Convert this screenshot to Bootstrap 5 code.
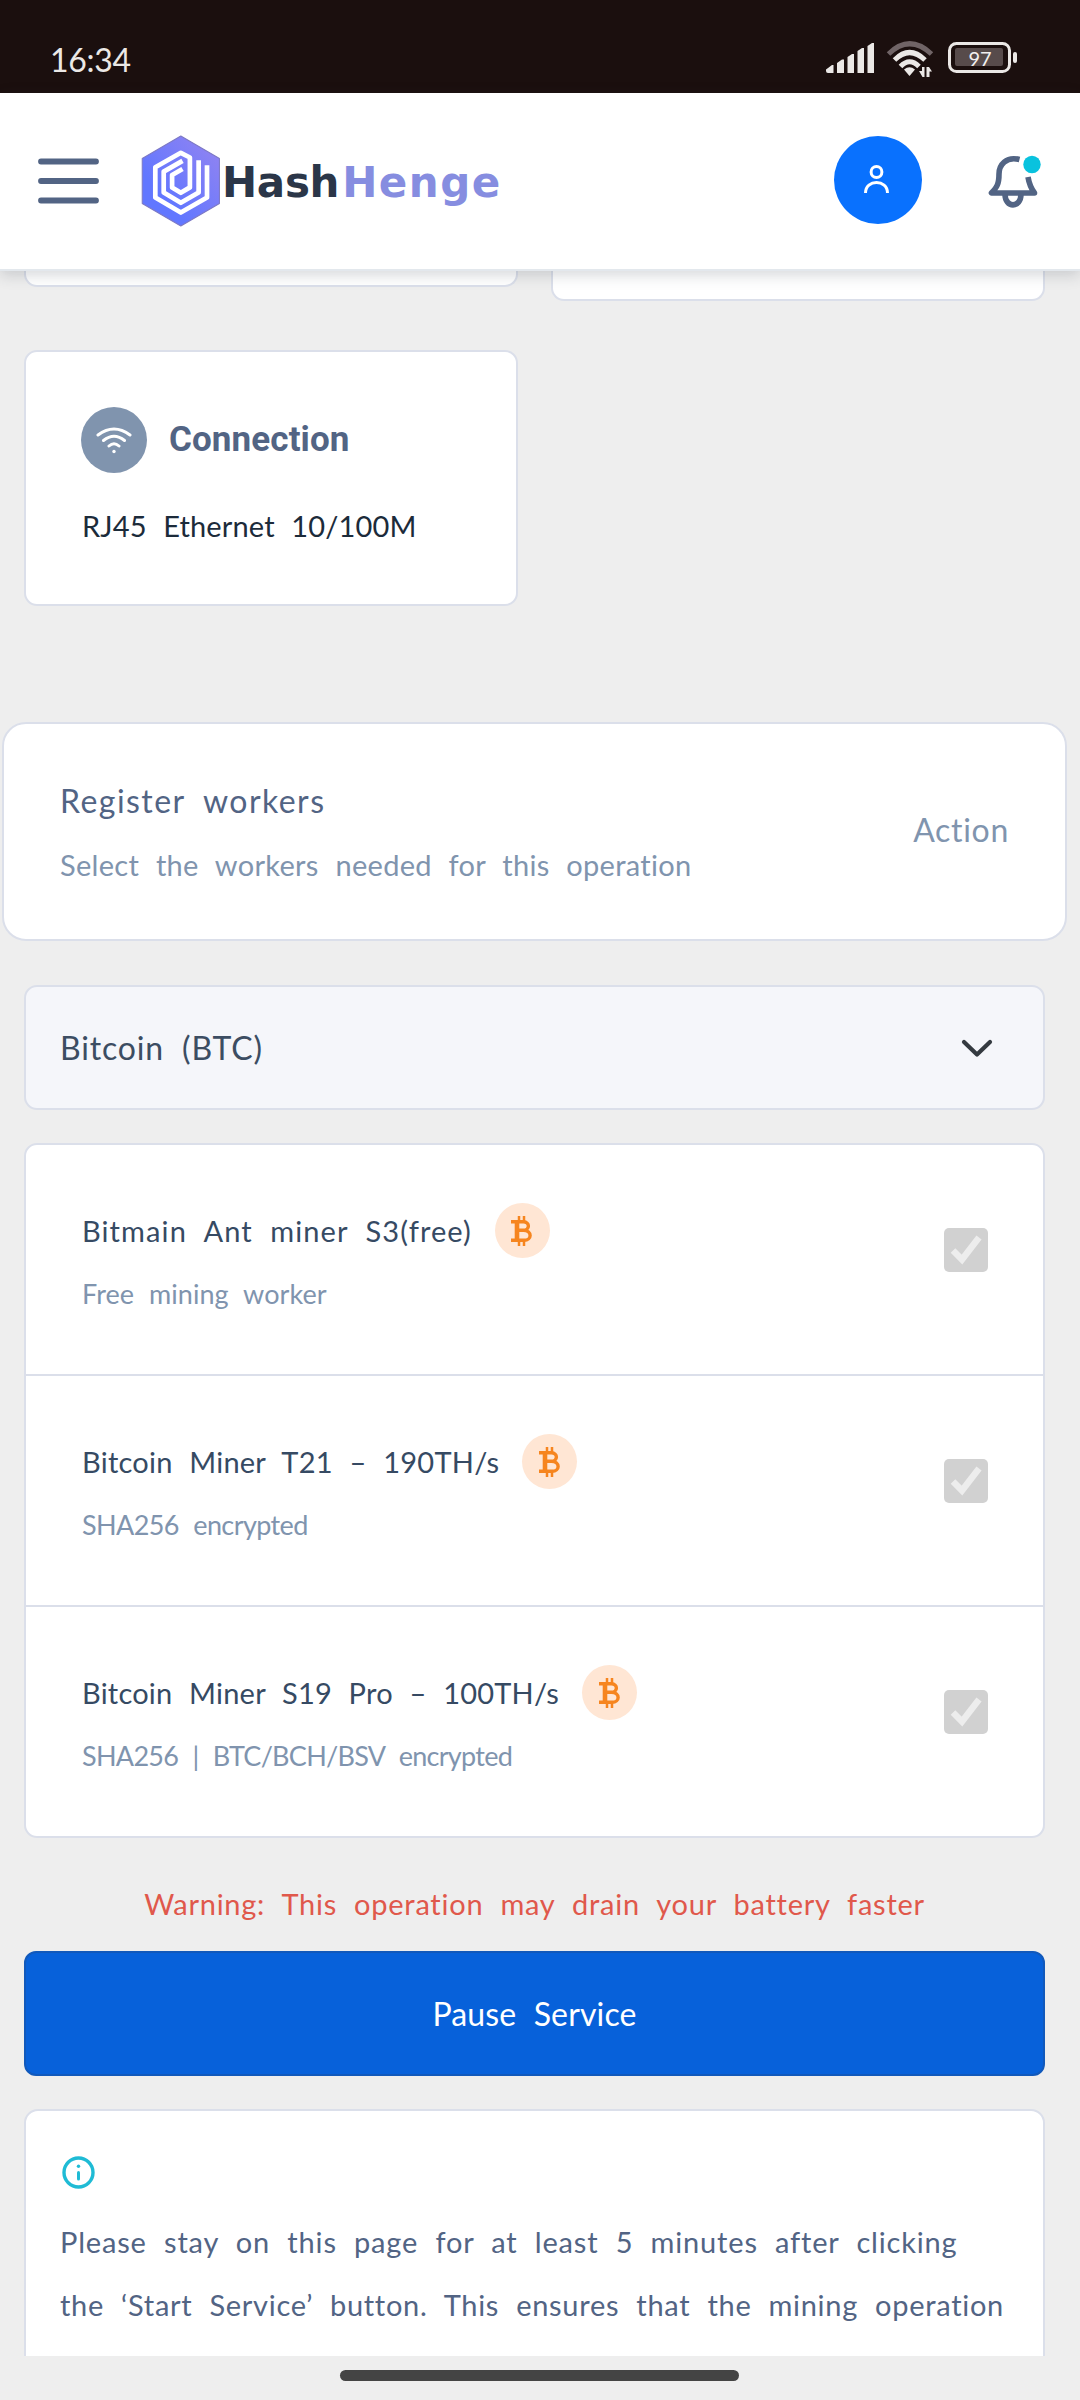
<!doctype html>
<html lang="en">
<head>
<meta charset="utf-8">
<meta name="viewport" content="width=device-width, initial-scale=1">
<title>HashHenge</title>
<link rel="stylesheet" href="https://cdn.jsdelivr.net/npm/bootstrap@5.3.0/dist/css/bootstrap.min.css">
<style>
html, body { height: 2400px; margin: 0; overflow: hidden; }
body { background: #eeeeee; font-family: Lato, "Noto Sans", sans-serif; font-size: 29px; line-height: 44px; color: #526484; word-spacing: 9px; font-variant-ligatures: none; }
svg { display: block; flex: none; }
.status-strip { height: 93px; background: #1b0f0e; color: #ebe8e6; padding: 0 62px 0 50px; }
.clock { font-size: 32px; letter-spacing: -.3px; padding-top: 38px; }
.status-icons { padding-top: 38px; }
.top-nav { height: 178px; background: #fff; border-bottom: 2px solid #e3e8ed; box-shadow: 0 4px 14px rgba(43,55,72,.2); padding: 0 39px 0 38px; position: relative; z-index: 2; }
.brand-mark { margin-left: 42px; }
.brand-word { font: bold 42px/92px "DejaVu Sans", sans-serif; color: #2b3648; margin-left: 1px; padding-top: 3px; letter-spacing: -.3px; }
.brand-word .henge { color: #868de0; letter-spacing: 1.5px; margin-left: 3px; }
.user-chip { width: 88px; height: 88px; background: #0971fe; margin-top: -2px; }
.bell-btn { margin-left: 65px; }
.page-area { padding: 0 35px 0 24px; min-height: 0; }
.panel { background: #fff; border: 2px solid #dbdfea; border-radius: 13px; }
.half { width: 494px; }
.peek-l { height: 15.5px; border-top: 0; border-radius: 0 0 13px 13px; }
.peek-r { height: 29.5px; border-top: 0; border-radius: 0 0 13px 13px; }
.peek-row { height: 79px; }
.conn { height: 256px; padding: 55px 55px 0; }
.conn-icon { width: 66px; height: 66px; background: #8094ae; }
.conn-title { font: bold 35px/66px Roboto, sans-serif; margin-left: 22px; letter-spacing: .1px; }
.conn-value { color: #1c2b3a; margin-top: 31px; letter-spacing: .15px; padding-left: 1px; }
.register { height: 219px; margin: 116px -22px 0 -22px; border-radius: 24px; padding: 0 56px; }
.soft { color: #8094ae; }
.heading-lg { font-size: 32px; line-height: 50px; }
.ls-reg { letter-spacing: 1.45px; }
.ls-sel { letter-spacing: .3px; margin-top: 17px; }
.ls-act { letter-spacing: .7px; margin-bottom: 3px; }
.coin-select { height: 125px; background: #f5f6fa; margin-top: 44px; padding: 0 48px 0 34px; color: #3c4d62; letter-spacing: .85px; }
.workers { margin-top: 33px; overflow: hidden; }
.worker { height: 231px; padding: 58px 55px 0; border-bottom: 2px solid #dbdfea; }
.worker:last-child { height: 229px; border-bottom: 0; }
.worker-name { color: #364a63; height: 55px; padding-left: 1px; }
.worker-sub { font-size: 27px; line-height: 40px; margin-top: 16px; word-spacing: 8px; letter-spacing: .05px; color: #8094ae; padding-left: 1px; }
.coin-chip { width: 55px; height: 55px; background: #ffe6d4; margin-left: 23px; }
.tick { margin-top: 25px; }
.n1 { letter-spacing: 1.1px; } .n2 { letter-spacing: .24px; } .n3 { letter-spacing: .22px; }
.s2 { letter-spacing: -.6px; } .s3 { letter-spacing: -.72px; }
.warn-line { color: #e0584b; margin-top: 44px; letter-spacing: .74px; white-space: nowrap; }
.pause-btn { height: 125px; margin-top: 25px; background: #0761da; border: 2px solid #1159bb; border-radius: 12px; color: #fff; font-size: 32px; letter-spacing: .15px; word-spacing: 9px; flex: none; }
.info-panel { margin-top: 33px; padding: 43px 34px 0; height: 320px; border-radius: 14px; flex: none; }
.info-copy { line-height: 63px; margin-top: 19px; letter-spacing: .83px; white-space: nowrap; }
.info-copy .row-b { letter-spacing: .7px; }
.gesture { height: 44px; background: #eeeeee; padding-top: 14px; }
.gesture-bar { width: 399px; height: 11px; background: #444; margin-left: 340px; }
</style>
</head>
<body class="d-flex flex-column">

<svg width="0" height="0" class="position-absolute" aria-hidden="true">
  <symbol id="coin" viewBox="0 0 22 30">
    <g fill="none" stroke="#f6851f">
      <path stroke-width="4.600" d="M6 5V25"/>
      <path stroke-width="3.400" d="M0 5.700H12.500C19 6 19 14 12.500 14.300H7M12.500 14.300C21.500 14.500 21 24.300 13 24.300H0"/>
      <path stroke-width="2.500" d="M8 0V5.500M13 0V5.500M8 24.500V30M13 24.500V30"/>
    </g>
  </symbol>
  <symbol id="ticked" viewBox="0 0 44 44">
    <rect width="44" height="44" rx="5" fill="#d1d1d1"/>
    <path d="M9 22.500L18 31.500L35 9.500" fill="none" stroke="#ededed" stroke-width="6.500"/>
  </symbol>
</svg>

<header class="status-strip d-flex justify-content-between flex-shrink-0">
  <div class="clock">16:34</div>
  <div class="status-icons">
    <svg width="194" height="40" viewBox="824 38 194 40">
      <g fill="#ebe8e6">
        <path d="M826 71V69.500L832 65H833.500V73H828Q826 73 826 71ZM837 63L842 59.500H844V73H837ZM847.500 57L852 54H854V73H847.500ZM857.500 51L862 48H864V73H857.500ZM867.500 46L872 43H874V73H867.500Z"/>
        <path d="M909.500 76L904 69.500Q909.500 65 915 69.500Z"/>
        <path d="M919 71H922V67H924.500V77H922.500ZM926.500 67H929L932 71.500H929.500V77H926.500Z"/>
        <rect x="1013" y="52" width="4" height="11" rx="2"/>
      </g>
      <g fill="none" stroke-width="5">
        <path stroke="#706466" d="M888.500 54Q909.500 33.500 931.500 54"/>
        <path stroke="#ebe8e6" d="M894.500 60Q909.500 45 925 60"/>
        <path stroke="#ebe8e6" d="M900.500 66.500Q909.500 57 919 66.500"/>
      </g>
      <rect x="949.500" y="43.500" width="60" height="28" rx="7" fill="none" stroke="#ebe8e6" stroke-width="3"/>
      <rect x="955" y="48" width="48" height="18" rx="2" fill="#574b4b"/>
      <text x="980" y="66" text-anchor="middle" font-family="Lato, sans-serif" font-size="20" fill="#f2efef" letter-spacing="0">97</text>
    </svg>
  </div>
</header>

<nav class="top-nav d-flex align-items-center flex-shrink-0">
  <svg width="61" height="46" viewBox="0 0 61 46"><path d="M3 3.500H58M3 23H58M3 42.500H58" stroke="#526484" stroke-width="5.800" stroke-linecap="round"/></svg>
  <svg class="brand-mark" width="80" height="92" viewBox="15 17 237 274">
    <defs><linearGradient id="hexfill" x1="0" y1="1" x2="1" y2="0"><stop offset=".3" stop-color="#6277ff"/><stop offset="1" stop-color="#9685f0"/></linearGradient></defs>
    <path d="M133 20L248 87V221L133 288L18 221V87Z" fill="url(#hexfill)" stroke="#7c78c4" stroke-width="3" stroke-linejoin="round"/>
    <path d="M211 107V203L133 248L57 203V113L133 70L160 84V173L133 189L107 173V136L138 118M138 94L82 126V188L133 219L186 188V92" fill="none" stroke="#fff" stroke-width="14" stroke-linejoin="round"/>
  </svg>
  <div class="brand-word">Hash<span class="henge">Henge</span></div>
  <div class="user-chip rounded-circle ms-auto d-flex align-items-center justify-content-center">
    <svg width="28" height="32" viewBox="0 0 28 32" fill="none" stroke="#fff" stroke-width="3"><circle cx="12.500" cy="8" r="5.400"/><path d="M1.500 29C1.500 15 23.500 15 23.500 29"/></svg>
  </div>
  <svg class="bell-btn" width="54" height="56" viewBox="986 153 54 56">
    <g fill="none" stroke="#526484" stroke-width="5.600" stroke-linejoin="round">
      <path d="M1018.500 159.500C1005 156 998 165 998 174C998 184 996 187 990.500 193H1033.500C1029 187 1028 183 1027 177"/>
      <path d="M1004 194C1004 208.500 1020 208.500 1020 194"/>
    </g>
    <circle cx="1031" cy="164.500" r="8.700" fill="#09c2de"/>
  </svg>
</nav>

<main class="page-area flex-grow-1 d-flex flex-column overflow-hidden">
  <div class="peek-row d-flex justify-content-between align-items-start flex-shrink-0">
    <div class="panel half peek-l"></div>
    <div class="panel half peek-r"></div>
  </div>

  <section class="panel half conn flex-shrink-0">
    <div class="d-flex align-items-center">
      <div class="conn-icon rounded-circle d-flex align-items-center justify-content-center">
        <svg width="38" height="30" viewBox="0 0 38 30" fill="none" stroke="#fff" stroke-width="3" stroke-linecap="round"><path d="M3 10Q19-2 35 10M8.500 15.500Q19 7 29.500 15.500M14 21Q19 16.500 24 21"/><circle cx="19" cy="26.500" r="1.700" fill="#fff" stroke="none"/></svg>
      </div>
      <div class="conn-title">Connection</div>
    </div>
    <div class="conn-value">RJ45 Ethernet 10/100M</div>
  </section>

  <section class="panel register d-flex align-items-center justify-content-between flex-shrink-0">
    <div>
      <div class="heading-lg ls-reg">Register workers</div>
      <div class="soft ls-sel">Select the workers needed for this operation</div>
    </div>
    <div class="heading-lg soft ls-act">Action</div>
  </section>

  <div class="panel coin-select heading-lg d-flex align-items-center justify-content-between flex-shrink-0">
    <span>Bitcoin (BTC)</span>
    <svg width="36" height="22" viewBox="0 0 36 22"><path d="M5 5L18 17.500L31 5" fill="none" stroke="#343a40" stroke-width="4.200" stroke-linecap="round" stroke-linejoin="round"/></svg>
  </div>

  <div class="panel workers flex-shrink-0">
    <div class="worker d-flex justify-content-between">
      <div>
        <div class="worker-name d-flex align-items-center n1">Bitmain Ant miner S3(free)<span class="coin-chip rounded-circle d-flex align-items-center justify-content-center"><svg width="22" height="30"><use href="#coin"/></svg></span></div>
        <div class="worker-sub">Free mining worker</div>
      </div>
      <svg class="tick" width="44" height="44"><use href="#ticked"/></svg>
    </div>
    <div class="worker d-flex justify-content-between">
      <div>
        <div class="worker-name d-flex align-items-center n2">Bitcoin Miner T21 – 190TH/s<span class="coin-chip rounded-circle d-flex align-items-center justify-content-center"><svg width="22" height="30"><use href="#coin"/></svg></span></div>
        <div class="worker-sub s2">SHA256 encrypted</div>
      </div>
      <svg class="tick" width="44" height="44"><use href="#ticked"/></svg>
    </div>
    <div class="worker d-flex justify-content-between">
      <div>
        <div class="worker-name d-flex align-items-center n3">Bitcoin Miner S19 Pro – 100TH/s<span class="coin-chip rounded-circle d-flex align-items-center justify-content-center"><svg width="22" height="30"><use href="#coin"/></svg></span></div>
        <div class="worker-sub s3">SHA256 | BTC/BCH/BSV encrypted</div>
      </div>
      <svg class="tick" width="44" height="44"><use href="#ticked"/></svg>
    </div>
  </div>

  <div class="warn-line text-center">Warning: This operation may drain your battery faster</div>
  <button type="button" class="btn pause-btn w-100">Pause Service</button>

  <section class="panel info-panel">
    <svg width="37" height="37" viewBox="0 0 37 37"><circle cx="18.500" cy="18.500" r="14.500" fill="none" stroke="#1fbbd5" stroke-width="3.400"/><circle cx="18.500" cy="12.300" r="1.700" fill="#1fbbd5"/><path d="M18.500 18.500V25" stroke="#1fbbd5" stroke-width="3" stroke-linecap="round"/></svg>
    <div class="info-copy">Please stay on this page for at least 5 minutes after clicking<br><span class="row-b">the ‘Start Service’ button. This ensures that the mining operation</span></div>
  </section>
</main>

<footer class="gesture flex-shrink-0"><div class="gesture-bar rounded-pill"></div></footer>
<script src="https://cdn.jsdelivr.net/npm/bootstrap@5.3.0/dist/js/bootstrap.bundle.min.js"></script>
</body>
</html>
